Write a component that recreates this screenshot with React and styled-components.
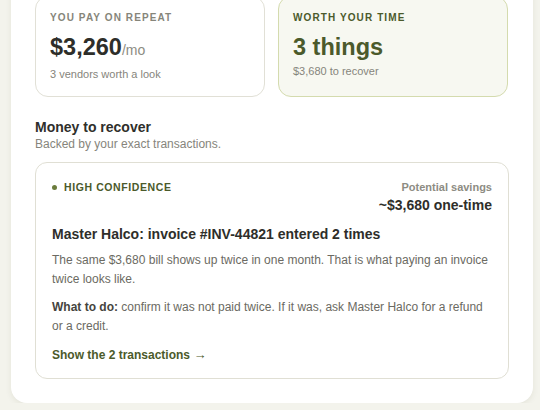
import React from "react";
import styled, { createGlobalStyle } from "styled-components";

const Global = createGlobalStyle`
  html, body {
    margin: 0;
    padding: 0;
    background: #f3f3ec;
    font-family: "Liberation Sans", Arial, sans-serif;
    overflow: hidden;
  }
`;

const Page = styled.div`
  padding: 0 7px 0 11px;
`;

const Panel = styled.div`
  margin-top: -40px;
  background: #fff;
  border-radius: 16px;
  box-shadow: 0 2px 6px rgba(60, 60, 30, 0.08);
  padding: 36px 24px 24px;
  width: 474px;
`;

const Stats = styled.div`
  display: grid;
  grid-template-columns: 230px 230px;
  gap: 13px;
`;

const Stat = styled.div`
  border: 1px solid ${(p) => (p.$accent ? "#d4dbae" : "#e1e0d6")};
  background: ${(p) => (p.$accent ? "#f7f8f1" : "#fff")};
  border-radius: 13px;
  padding: 15px 14px 15px;
  height: 69px;
`;

const StatLabel = styled.div`
  font-size: 10px;
  font-weight: 700;
  letter-spacing: 1.1px;
  color: ${(p) => (p.$accent ? "#4b5a2b" : "#86857a")};
  line-height: 12px;
`;

const StatValue = styled.div`
  margin-top: 9px;
  font-size: 23.5px;
  font-weight: 700;
  color: ${(p) => (p.$accent ? "#4b5a2b" : "#2e2e2a")};
  line-height: 28px;
  span {
    font-size: 14px;
    font-weight: 400;
    color: #8d8c83;
  }
`;

const StatSub = styled.div`
  margin-top: 4px;
  font-size: 11px;
  color: #86857c;
  line-height: 13px;
`;

const SectionTitle = styled.h2`
  margin: 22px 0 0;
  font-size: 14px;
  font-weight: 700;
  color: #2f2f2b;
  line-height: 16px;
`;

const SectionSub = styled.div`
  margin-top: 2px;
  font-size: 12px;
  color: #86857c;
  line-height: 14px;
`;

const Finding = styled.div`
  margin-top: 11px;
  border: 1px solid #e0dfd4;
  border-radius: 12px;
  padding: 17px 16px 14px;
`;

const FindingHead = styled.div`
  display: flex;
  justify-content: space-between;
  align-items: flex-start;
`;

const Badge = styled.div`
  display: flex;
  align-items: center;
  gap: 7px;
  font-size: 10.5px;
  font-weight: 700;
  letter-spacing: 0.6px;
  color: #4b5a2b;
  line-height: 14px;
  &::before {
    content: "";
    width: 5px;
    height: 5px;
    border-radius: 50%;
    background: #6b7c3c;
  }
`;

const Savings = styled.div`
  text-align: right;
`;

const SavingsLabel = styled.div`
  font-size: 11px;
  font-weight: 700;
  color: #8d8c83;
  line-height: 14px;
`;

const SavingsValue = styled.div`
  font-size: 14px;
  font-weight: 700;
  color: #2e2e2a;
  line-height: 18px;
  margin-top: 2px;
`;

const FindingTitle = styled.h3`
  margin: 11px 0 0;
  font-size: 14px;
  font-weight: 700;
  color: #2e2e2a;
  line-height: 18px;
`;

const Body = styled.p`
  margin: ${(p) => (p.$first ? "8px" : "9px")} 0 0;
  font-size: 12px;
  line-height: 19px;
  color: #6b6a62;
  b {
    color: #45443e;
  }
`;

const ShowLink = styled.a`
  display: block;
  margin-top: 10px;
  font-size: 12px;
  font-weight: 700;
  color: #4b5a2b;
  line-height: 18px;
  text-decoration: none;
  span {
    font-size: 13px;
  }
`;

export default function App() {
  return (
    <Page>
      <Global />
      <Panel>
        <Stats>
          <Stat>
            <StatLabel>YOU PAY ON REPEAT</StatLabel>
            <StatValue>
              $3,260<span>/mo</span>
            </StatValue>
            <StatSub>3 vendors worth a look</StatSub>
          </Stat>
          <Stat $accent>
            <StatLabel $accent>WORTH YOUR TIME</StatLabel>
            <StatValue $accent>3 things</StatValue>
            <StatSub>$3,680 to recover</StatSub>
          </Stat>
        </Stats>
        <SectionTitle>Money to recover</SectionTitle>
        <SectionSub>Backed by your exact transactions.</SectionSub>
        <Finding>
          <FindingHead>
            <Badge>HIGH CONFIDENCE</Badge>
            <Savings>
              <SavingsLabel>Potential savings</SavingsLabel>
              <SavingsValue>~$3,680 one-time</SavingsValue>
            </Savings>
          </FindingHead>
          <FindingTitle>Master Halco: invoice #INV-44821 entered 2 times</FindingTitle>
          <Body $first>
            The same $3,680 bill shows up twice in one month. That is what paying an invoice
            twice looks like.
          </Body>
          <Body>
            <b>What to do:</b> confirm it was not paid twice. If it was, ask Master Halco for a
            refund or a credit.
          </Body>
          <ShowLink href="#">
            Show the 2 transactions <span>→</span>
          </ShowLink>
        </Finding>
      </Panel>
    </Page>
  );
}
